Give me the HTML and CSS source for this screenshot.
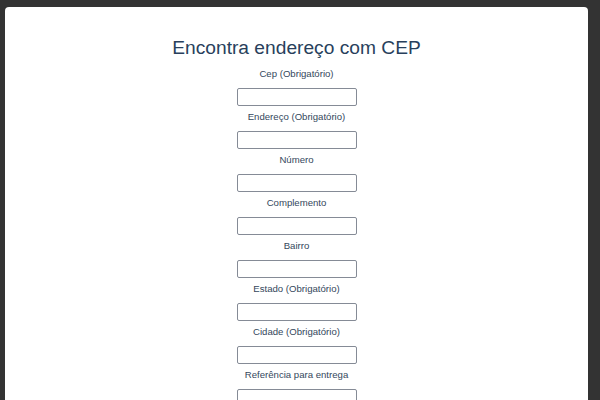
FILE: index.html
```html
<!DOCTYPE html>
<html lang="pt-BR">
<head>
<meta charset="utf-8">
<title>Encontra endereço com CEP</title>
<link rel="stylesheet" href="styles.css">
</head>
<body>
<main class="card">
  <h1 class="title">Encontra endereço com CEP</h1>
  <form class="form">
    <label class="field"><span class="field-label">Cep (Obrigatório)</span><input class="field-input" type="text"></label>
    <label class="field"><span class="field-label">Endereço (Obrigatório)</span><input class="field-input" type="text"></label>
    <label class="field"><span class="field-label">Número</span><input class="field-input" type="text"></label>
    <label class="field"><span class="field-label">Complemento</span><input class="field-input" type="text"></label>
    <label class="field"><span class="field-label">Bairro</span><input class="field-input" type="text"></label>
    <label class="field"><span class="field-label">Estado (Obrigatório)</span><input class="field-input" type="text"></label>
    <label class="field"><span class="field-label">Cidade (Obrigatório)</span><input class="field-input" type="text"></label>
    <label class="field"><span class="field-label">Referência para entrega</span><input class="field-input" type="text"></label>
  </form>
</main>
</body>
</html>
```

FILE: styles.css
```css
html, body {
  margin: 0;
  padding: 0;
}
body {
  background: #333333;
  font-family: "Liberation Sans", Arial, Helvetica, sans-serif;
  color: #2c3e50;
  overflow: hidden;
}
.card {
  margin: 7px 12px 0 5px;
  background: #ffffff;
  border-radius: 4px 4px 0 0;
  padding-top: 30.4px;
  min-height: 420px;
  text-align: center;
}
.title {
  margin: 0 0 9px;
  font-size: 19.2px;
  line-height: 21.4px;
  font-weight: normal;
  color: #283f5c;
}
.form {
  display: flex;
  flex-direction: column;
  align-items: center;
}
.field {
  display: flex;
  flex-direction: column;
  align-items: center;
}
.field-label {
  font-size: 9.6px;
  line-height: 11px;
  margin-bottom: 9px;
  color: #34475c;
}
.field-input {
  box-sizing: border-box;
  width: 120px;
  height: 18px;
  margin: 0 0 5px;
  border: 1px solid #858b96;
  border-radius: 2px;
  background: #ffffff;
  padding: 0 4px;
  font: inherit;
  font-size: 9.6px;
}
```
